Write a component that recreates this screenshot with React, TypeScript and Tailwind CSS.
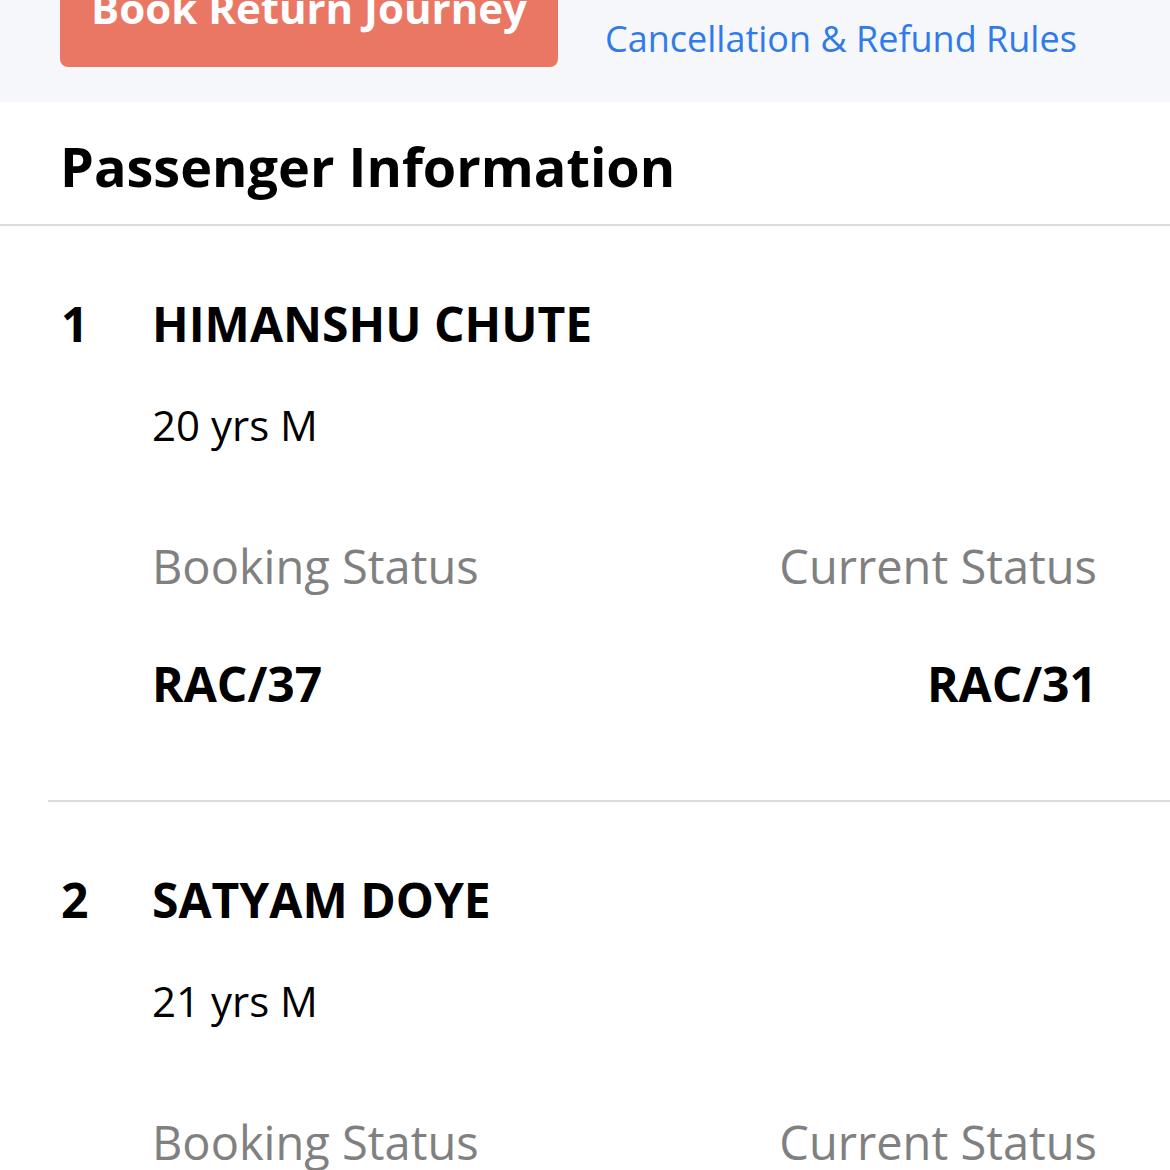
import React from "react";

interface Passenger {
  no: number;
  name: string;
  info: string;
  booking: string;
  current: string;
}

const passengers: Passenger[] = [
  { no: 1, name: "HIMANSHU CHUTE", info: "20 yrs M", booking: "RAC/37", current: "RAC/31" },
  { no: 2, name: "SATYAM DOYE", info: "21 yrs M", booking: "RAC/35", current: "RAC/29" },
];

const PassengerRow: React.FC<{ p: Passenger; last: boolean }> = ({ p, last }) => {
  return (
    <div className="pl-[48px]">
      <div className={`pl-[12px] pt-[74px] pb-[92px] pr-[73px] ${last ? "" : "border-b-2 border-[#dcdcdc]"}`}>
        <div className="flex items-center text-[48px] font-bold leading-none text-black">
          <span className="w-[92px] pl-[1px]">{p.no}</span>
          <span>{p.name}</span>
        </div>
        <div className="pl-[92px]">
          <div className="mt-[56px] text-[42px] leading-none text-black">{p.info}</div>
          <div className="mt-[97px] flex justify-between text-[47px] leading-none text-[#808080]">
            <span>Booking Status</span>
            <span>Current Status</span>
          </div>
          <div className="mt-[70px] flex justify-between text-[48px] font-bold leading-none text-black">
            <span>{p.booking}</span>
            <span>{p.current}</span>
          </div>
        </div>
      </div>
    </div>
  );
};

export default function App() {
  return (
    <div className="w-[1170px] h-[1170px] overflow-hidden bg-white" style={{ fontFamily: '"Open Sans", sans-serif' }}>
      <div className="bg-[#f6f7fb] h-[102px] flex items-end pb-[35px] pl-[60px]">
        <button className="w-[498px] h-[110px] bg-[#ea7664] rounded-[8px] text-white text-[42px] font-bold flex items-start justify-center pt-[30px] leading-none">
          Book Return Journey
        </button>
        <a className="ml-[47px] mb-[10px] text-[36px] text-[#2f7bea] leading-none">Cancellation &amp; Refund Rules</a>
      </div>
      <div className="border-b-2 border-[#dcdcdc] pl-[60px] h-[124px] flex items-center pt-[5px]">
        <h2 className="text-[54px] font-bold leading-none text-black">Passenger Information</h2>
      </div>
      {passengers.map((p, i) => (
        <PassengerRow key={p.no} p={p} last={i === passengers.length - 1} />
      ))}
    </div>
  );
}
